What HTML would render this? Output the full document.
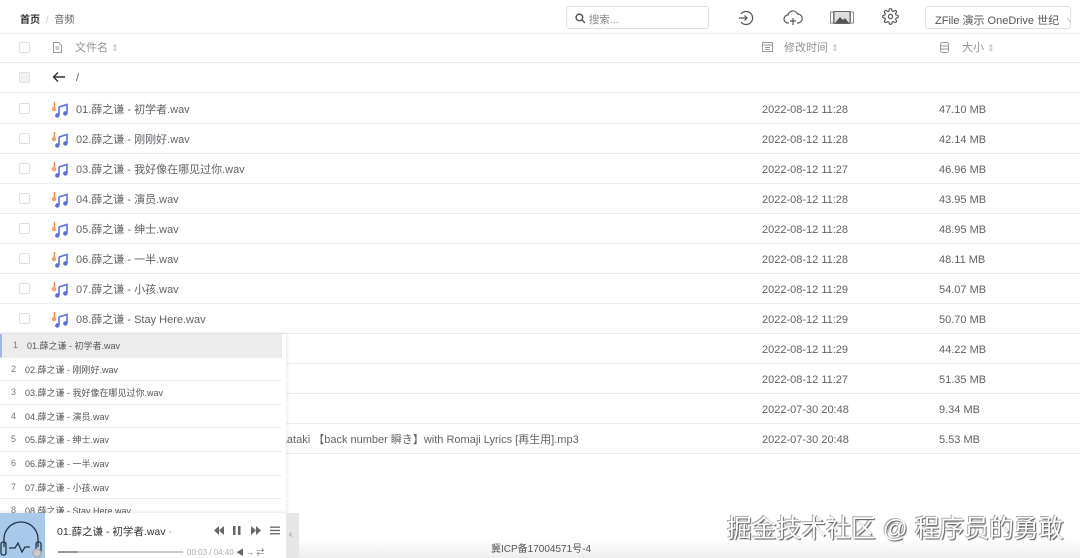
<!DOCTYPE html>
<html><head><meta charset="utf-8"><style>
*{box-sizing:border-box;margin:0;padding:0}
body{width:1080px;height:558px;overflow:hidden;background:#fff;font-family:"Liberation Sans","Noto Sans CJK SC",sans-serif;color:#606266;position:relative;font-size:11px}
.abs{position:absolute}
.cb{position:absolute;left:19px;width:11px;height:11px;border:1px solid #dcdfe6;border-radius:2px;background:#fff}
.row{position:absolute;left:0;width:1080px;height:30px;border-bottom:1px solid #ebeef5}
.row span{position:absolute;top:1px;line-height:29px;font-size:11px;color:#606266;white-space:nowrap}
.row span.t{font-size:11px;top:2px}
.pl{position:absolute;left:0;width:282px;height:23.6px;border-bottom:1px solid #eee;background:#fff;font-size:9px;color:#555}
.pl b{font-weight:normal;position:absolute;left:11px;top:6px;color:#777}
.pl i{font-style:normal;position:absolute;left:25px;top:5px}
</style></head><body>
<div class="abs" style="left:20px;top:11px;font-size:10px;color:#303133;font-weight:bold">首页 <span style="color:#c0c4cc;font-weight:normal;margin:0 3px">/</span> <span style="color:#606266;font-weight:normal">音频</span></div>
<div class="abs" style="left:566px;top:6px;width:143px;height:23px;border:1px solid #dcdfe6;border-radius:3px;font-size:10.5px;color:#888;padding:5px 0 0 8px">
<svg width="11" height="11" viewBox="0 0 10 10" style="vertical-align:-1px"><circle cx="4" cy="4" r="3" fill="none" stroke="#555" stroke-width="1.3"/><path d="M6.3 6.3L9 9" stroke="#555" stroke-width="1.3"/></svg> 搜索...</div>
<svg class="abs" style="left:737px;top:9px" width="18" height="18" viewBox="0 0 18 18" fill="none" stroke="#555" stroke-width="1.2"><path d="M4 5A6.5 6.5 0 1 1 4 13"/><path d="M2 9h8M7.5 6.5L10 9l-2.5 2.5"/></svg>
<svg class="abs" style="left:783px;top:9px" width="20" height="18" viewBox="0 0 20 18" fill="none" stroke="#555" stroke-width="1.2"><path d="M6 14H5a4 4 0 0 1 0-8 5 5 0 0 1 9.5-1A4 4 0 0 1 15 14h-1"/><path d="M10 9v7M7 12h6"/></svg>
<svg class="abs" style="left:830px;top:11px" width="24" height="13" viewBox="0 0 24 13"><rect x="0.5" y="1" width="3" height="11" fill="none" stroke="#888"/><rect x="20.5" y="1" width="3" height="11" fill="none" stroke="#888"/><rect x="4" y="0.5" width="16" height="12" fill="#ddd" stroke="#666"/><path d="M5 12l5-6 3 3 2-2 4 5z" fill="#555"/></svg>
<svg class="abs" style="left:882px;top:8px" width="17" height="17" viewBox="0 0 24 24" fill="none" stroke="#555" stroke-width="1.6"><circle cx="12" cy="12" r="3"/><path d="M19.4 15a1.7 1.7 0 0 0 .3 1.8l.1.1a2 2 0 1 1-2.8 2.8l-.1-.1a1.7 1.7 0 0 0-1.8-.3 1.7 1.7 0 0 0-1 1.5V21a2 2 0 1 1-4 0v-.1a1.7 1.7 0 0 0-1.1-1.5 1.7 1.7 0 0 0-1.8.3l-.1.1a2 2 0 1 1-2.8-2.8l.1-.1a1.7 1.7 0 0 0 .3-1.8 1.7 1.7 0 0 0-1.5-1H3a2 2 0 1 1 0-4h.1a1.7 1.7 0 0 0 1.5-1.1 1.7 1.7 0 0 0-.3-1.8l-.1-.1a2 2 0 1 1 2.8-2.8l.1.1a1.7 1.7 0 0 0 1.8.3H9a1.7 1.7 0 0 0 1-1.5V3a2 2 0 1 1 4 0v.1a1.7 1.7 0 0 0 1 1.5 1.7 1.7 0 0 0 1.8-.3l.1-.1a2 2 0 1 1 2.8 2.8l-.1.1a1.7 1.7 0 0 0-.3 1.8V9a1.7 1.7 0 0 0 1.5 1H21a2 2 0 1 1 0 4h-.1a1.7 1.7 0 0 0-1.5 1z"/></svg>
<div class="abs" style="left:925px;top:6px;width:146px;height:23px;border:1px solid #dcdfe6;border-radius:3px;font-size:11px;color:#555;padding:5px 0 0 9px;white-space:nowrap;overflow:hidden">ZFile 演示 OneDrive 世纪 <span style="color:#aaa;margin-left:4px;font-size:9px">∨</span></div>
<div class="abs" style="left:0;top:33px;width:1080px;height:1px;background:#f0f0f0"></div>
<div class="row" style="top:33px;color:#909399"><div class="cb" style="top:9px"></div>
<svg class="abs" style="left:53px;top:9px" width="9" height="11" viewBox="0 0 9 11" fill="none" stroke="#999"><path d="M.5.5h5l3 3v7h-8z M2.5 5h4M2.5 7h4"/></svg>
<span style="left:75px;color:#909399">文件名 <span style="position:static;font-size:9px;color:#bbb">⇕</span></span>
<svg class="abs" style="left:762px;top:9px" width="11" height="10" viewBox="0 0 11 10" fill="none" stroke="#999"><rect x=".5" y=".5" width="10" height="9"/><path d="M.5 3h10M3 5.5h5M3 7.5h5"/></svg>
<span style="left:784px;color:#909399">修改时间 <span style="position:static;font-size:9px;color:#bbb">⇕</span></span>
<svg class="abs" style="left:940px;top:9px" width="9" height="11" viewBox="0 0 9 11" fill="none" stroke="#999"><rect x=".5" y=".5" width="8" height="10" rx="2"/><path d="M.5 4h8M.5 7h8"/></svg>
<span style="left:962px;color:#909399">大小 <span style="position:static;font-size:9px;color:#bbb">⇕</span></span></div>
<div class="row" style="top:63px"><div class="cb" style="top:9px;background:#f2f2f2"></div>
<svg class="abs" style="left:52px;top:8px" width="14" height="12" viewBox="0 0 14 12" fill="none" stroke="#333" stroke-width="1.4"><path d="M13 6H1.5M6 1.5L1.5 6 6 10.5"/></svg><span style="left:76px">/</span></div>
<div id="rows"></div>
<script>
var n=["01.薛之谦 - 初学者.wav","02.薛之谦 - 刚刚好.wav","03.薛之谦 - 我好像在哪见过你.wav","04.薛之谦 - 演员.wav","05.薛之谦 - 绅士.wav","06.薛之谦 - 一半.wav","07.薛之谦 - 小孩.wav","08.薛之谦 - Stay Here.wav","09.薛之谦 - 丑八怪.wav","10.薛之谦 - 认真的雪.wav","Sparkle - RADWIMPS.mp3","瞬き - back number - Covered by Hatakeyaataki 【back number 瞬き】with Romaji Lyrics [再生用].mp3"];
var d=["2022-08-12 11:28","2022-08-12 11:28","2022-08-12 11:27","2022-08-12 11:28","2022-08-12 11:28","2022-08-12 11:28","2022-08-12 11:29","2022-08-12 11:29","2022-08-12 11:29","2022-08-12 11:27","2022-07-30 20:48","2022-07-30 20:48"];
var s=["47.10 MB","42.14 MB","46.96 MB","43.95 MB","48.95 MB","48.11 MB","54.07 MB","50.70 MB","44.22 MB","51.35 MB","9.34 MB","5.53 MB"];
var h="";var ic='<svg style="position:absolute;left:51px;top:6px" width="19" height="19" viewBox="0 0 19 19"><path d="M3.5 2v6" stroke="#f08a4b" stroke-width="1.4"/><circle cx="3" cy="9" r="2.3" fill="#f6a36b"/><path d="M8 7l8-2.5v9M8 7v8" stroke="#5b6ee1" stroke-width="1.6" fill="none"/><circle cx="6.3" cy="15.5" r="2.2" fill="#5b6ee1"/><circle cx="14.3" cy="13.5" r="2.2" fill="#5b6ee1"/></svg>';
for(var i=0;i<12;i++){h+='<div class="row" style="top:'+(94+i*30)+'px"><div class="cb" style="top:9px"></div>'+ic+'<span class="t" style="left:76px">'+n[i]+'</span><span class="t" style="left:762px">'+d[i]+'</span><span class="t" style="left:939px">'+s[i]+'</span></div>';}
document.getElementById("rows").innerHTML=h;
</script>
<div class="abs" style="left:0;top:334px;width:286px;height:179px;background:#fff;box-shadow:0 0 4px rgba(0,0,0,.15);overflow:hidden">
<div class="pl" style="top:0;background:#ececec;border-left:2px solid #9ab8ea"><b>1</b><i>01.薛之谦 - 初学者.wav</i></div>
<div class="pl" style="top:23.6px"><b>2</b><i>02.薛之谦 - 刚刚好.wav</i></div>
<div class="pl" style="top:47.2px"><b>3</b><i>03.薛之谦 - 我好像在哪见过你.wav</i></div>
<div class="pl" style="top:70.8px"><b>4</b><i>04.薛之谦 - 演员.wav</i></div>
<div class="pl" style="top:94.4px"><b>5</b><i>05.薛之谦 - 绅士.wav</i></div>
<div class="pl" style="top:118px"><b>6</b><i>06.薛之谦 - 一半.wav</i></div>
<div class="pl" style="top:141.6px"><b>7</b><i>07.薛之谦 - 小孩.wav</i></div>
<div class="pl" style="top:165.2px"><b>8</b><i>08.薛之谦 - Stay Here.wav</i></div>
</div>
<div class="abs" style="left:0;top:538px;width:1080px;height:20px;background:linear-gradient(#fff,#eee)"></div>
<div class="abs" style="left:0;top:513px;width:286px;height:45px;background:#fff;box-shadow:0 0 4px rgba(0,0,0,.15)">
<div class="abs" style="left:0;top:0;width:45px;height:45px;background:#a9c9ea"></div>
<svg class="abs" style="left:0;top:4px" width="45" height="41" viewBox="0 0 45 41" fill="none" stroke="#234" stroke-width="1.3"><path d="M4 30V22a17 17 0 0 1 34 0v8"/><rect x="1" y="25" width="5" height="13" rx="2"/><rect x="36" y="25" width="5" height="13" rx="2"/><path d="M9 31h6l3-5 4 9 3-5h5"/><circle cx="37" cy="36" r="4" fill="#ccc" stroke="#aaa"/></svg>
<div class="abs" style="left:57px;top:11px;font-size:10.5px;color:#333;white-space:nowrap">01.薛之谦 - 初学者.wav <span style="color:#999">-</span></div>
<svg class="abs" style="left:214px;top:12px" width="68" height="11" viewBox="0 0 68 11" fill="#666"><path d="M0 5.5L5 1v9zM5 5.5L10 1v9z"/><rect x="19" y="1" width="2.5" height="9"/><rect x="24" y="1" width="2.5" height="9"/><path d="M37 1l5 4.5L37 10zM42 1l5 4.5L42 10z"/><rect x="56" y="1.5" width="10" height="1.3"/><rect x="56" y="4.8" width="10" height="1.3"/><rect x="56" y="8.1" width="10" height="1.3"/></svg>
<div class="abs" style="left:58px;top:38px;width:125px;height:2px;background:#ccc"><div style="width:20px;height:2px;background:#999"></div></div>
<div class="abs" style="left:187px;top:34px;font-size:8px;color:#aaa;white-space:nowrap">00:03 / 04:40 <span style="color:#666">◀ → ⇄</span></div>
</div>
<div class="abs" style="left:286px;top:513px;width:13px;height:45px;background:#e6e6e6;color:#888;font-size:10px;padding:16px 0 0 3px">‹</div>
<div class="abs" style="left:491px;top:540px;font-size:10px;color:#555">冀ICP备17004571号-4</div>
<div class="abs" style="left:727px;top:509px;font-size:24.8px;color:#fff;text-shadow:1px 1px 1px #555,-1px -1px 0 #aaa;white-space:nowrap">掘金技术社区 @ 程序员的勇敢</div>
</body></html>
